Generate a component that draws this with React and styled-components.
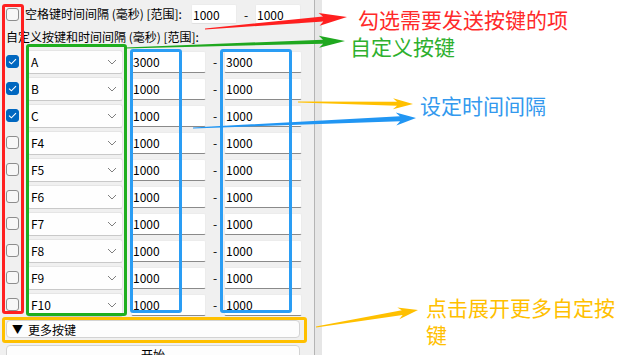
import React from 'react';
import styled, { createGlobalStyle } from 'styled-components';

const GlobalStyle = createGlobalStyle`
  html, body {
    margin: 0;
    padding: 0;
    background: #ffffff;
  }
  body {
    font-family: "Noto Sans CJK SC", "Noto Sans", sans-serif;
    font-size: 12px;
    color: #000;
    overflow: hidden;
  }
`;

const keys = [
  { name: 'A', from: 3000, to: 3000, checked: true },
  { name: 'B', from: 1000, to: 1000, checked: true },
  { name: 'C', from: 1000, to: 1000, checked: true },
  { name: 'F4', from: 1000, to: 1000 },
  { name: 'F5', from: 1000, to: 1000 },
  { name: 'F6', from: 1000, to: 1000 },
  { name: 'F7', from: 1000, to: 1000 },
  { name: 'F8', from: 1000, to: 1000 },
  { name: 'F9', from: 1000, to: 1000 },
  { name: 'F10', from: 1000, to: 1000 },
];

// tapered arrow: thin tail, thick shaft near the head, notched head
const arrowPoints = ([sx, sy], [ex, ey], w0, w1, headLen, headW) => {
  const len = Math.hypot(ex - sx, ey - sy);
  const dx = (ex - sx) / len;
  const dy = (ey - sy) / len;
  const nx = -dy;
  const ny = dx;
  const bx = ex - dx * headLen;
  const by = ey - dy * headLen;
  const wx = bx - dx * 4;
  const wy = by - dy * 4;
  const pts = [
    [sx + nx * w0 / 2, sy + ny * w0 / 2],
    [bx + nx * w1 / 2, by + ny * w1 / 2],
    [wx + nx * headW / 2, wy + ny * headW / 2],
    [ex, ey],
    [wx - nx * headW / 2, wy - ny * headW / 2],
    [bx - nx * w1 / 2, by - ny * w1 / 2],
    [sx - nx * w0 / 2, sy - ny * w0 / 2],
  ];
  return pts.map((p) => p.map((v) => v.toFixed(1)).join(',')).join(' ');
};

const arrows = [
  { from: [205, 29], to: [347, 17], w0: 1, w1: 5, head: 24, hw: 13, color: '#ff1f1f' },
  { from: [125, 48], to: [345, 41], w0: 1, w1: 4, head: 22, hw: 12, color: '#1fa81f' },
  { from: [298, 102], to: [413, 104], w0: 1, w1: 4, head: 16, hw: 11, color: '#ffc000' },
  { from: [193, 128], to: [416, 118], w0: 1, w1: 5, head: 16, hw: 13, color: '#2196f3' },
  { from: [316, 327], to: [418, 310], w0: 1, w1: 5, head: 16, hw: 12, color: '#ffc000' },
];

const Check = ({ checked }) => (
  <CheckBox checked={checked}>
    {checked && (
      <svg width="9" height="7" viewBox="0 0 9 7">
        <path d="M1 3.6 L3.4 5.8 L8 1.2" fill="none" stroke="#fff" strokeWidth="1.1" />
      </svg>
    )}
  </CheckBox>
);

const App = () => {
  return (
    <Page>
      <GlobalStyle />
      <Panel>
        <TopRow>
          <Check />
          <Label>空格键时间间隔 (毫秒) [范围]:</Label>
          <TopInput readOnly value="1000" />
          <Dash>-</Dash>
          <TopInput readOnly value="1000" />
        </TopRow>

        <SectionLabel>自定义按键和时间间隔 (毫秒) [范围]:</SectionLabel>

        <KeyList>
          {keys.map((k) => (
            <KeyRow key={k.name}>
              <Check checked={k.checked} />
              <KeySelect>
                <span>{k.name}</span>
                <svg width="10" height="6" viewBox="0 0 10 6">
                  <path d="M1 1 L5 5 L9 1" fill="none" stroke="#707070" strokeWidth="0.9" />
                </svg>
              </KeySelect>
              <RangeInput readOnly value={k.from} />
              <RangeDash>-</RangeDash>
              <RangeInput readOnly value={k.to} wide />
            </KeyRow>
          ))}
        </KeyList>

        <MoreButton>
          <Triangle>▼</Triangle>
          更多按键
        </MoreButton>
        <StartButton>开始</StartButton>
      </Panel>
      <Divider />
      <Blank />

      <Overlay>
        <Frame color="#ff2020" left={2} top={4} width={22} height={310} />
        <Frame color="#1fae1f" left={26} top={44} width={101} height={272} />
        <Frame color="#2a9df4" left={130} top={49} width={52} height={264} />
        <Frame color="#2a9df4" left={220} top={49} width={72} height={264} />
        <Frame color="#ffc000" left={2} top={317} width={305} height={26} />

        <ArrowLayer width="626" height="355" viewBox="0 0 626 355">
          {arrows.map((a, i) => (
            <polygon
              key={i}
              points={arrowPoints(a.from, a.to, a.w0, a.w1, a.head, a.hw)}
              fill={a.color}
            />
          ))}
        </ArrowLayer>

        <Note color="#ff2a2a" left={358} top={6}>勾选需要发送按键的项</Note>
        <Note color="#2eb02e" left={350} top={33}>自定义按键</Note>
        <Note color="#3399ee" left={420} top={92}>设定时间间隔</Note>
        <Note color="#ffc000" left={426} top={294} width={196}>点击展开更多自定按键</Note>
      </Overlay>
    </Page>
  );
};

const Page = styled.div`
  position: relative;
  display: flex;
  width: 626px;
  height: 355px;
  overflow: hidden;
`;

const Panel = styled.div`
  width: 314px;
  flex-shrink: 0;
  background: #f0f0f0;
  padding: 4px 0 0 6px;
  box-sizing: border-box;
  display: flex;
  flex-direction: column;
`;

const Divider = styled.div`
  width: 8px;
  flex-shrink: 0;
  background: #e6e6e6;
  border-left: 1px solid #b4b4b4;
  box-sizing: border-box;
`;

const Blank = styled.div`
  flex: 1;
  background: #fff;
`;

const TopRow = styled.div`
  display: flex;
  align-items: center;
  height: 20px;
`;

const Label = styled.span`
  margin-left: 6px;
  width: 166px;
  white-space: nowrap;
  line-height: 16px;
`;

const TopInput = styled.input`
  width: 46px;
  height: 20px;
  box-sizing: border-box;
  border: 1px solid #ececec;
  border-bottom-color: #e0e0e0;
  border-radius: 2px;
  background: #fff;
  font: inherit;
  padding: 0 0 0 1px;
  outline: none;
  color: #000;
`;

const Dash = styled.span`
  width: 18px;
  text-align: center;
`;

const SectionLabel = styled.div`
  margin-top: 5px;
  line-height: 16px;
  white-space: nowrap;
`;

const KeyList = styled.div`
  margin-top: 3px;
  display: flex;
  flex-direction: column;
`;

const KeyRow = styled.div`
  display: flex;
  align-items: center;
  height: 27px;
`;

const CheckBox = styled.span`
  width: 13px;
  height: 13px;
  flex-shrink: 0;
  box-sizing: border-box;
  border-radius: 3px;
  display: flex;
  align-items: center;
  justify-content: center;
  background: ${(p) => (p.checked ? '#0067c0' : '#f7f7f7')};
  border: 1px solid ${(p) => (p.checked ? '#0067c0' : '#8d8d8d')};
`;

const KeySelect = styled.div`
  margin-left: 8px;
  width: 96px;
  height: 24px;
  box-sizing: border-box;
  display: flex;
  align-items: center;
  justify-content: space-between;
  padding: 0 5px 0 3px;
  background: #fefefe;
  border: 1px solid #e5e5e5;
  border-bottom-color: #c9c9c9;
  border-radius: 3px;
`;

const RangeInput = styled.input`
  margin-left: ${(p) => (p.wide ? '0' : '8px')};
  width: ${(p) => (p.wide ? '78px' : '75px')};
  height: 22px;
  box-sizing: border-box;
  border: 1px solid #ececec;
  border-bottom: 1px solid #8a8a8a;
  border-radius: 2px;
  background: #fff;
  font: inherit;
  padding: 0 0 0 1px;
  outline: none;
  color: #000;
`;

const RangeDash = styled.span`
  width: 18px;
  text-align: center;
`;

const MoreButton = styled.div`
  margin-top: 2px;
  width: 294px;
  height: 18px;
  box-sizing: border-box;
  padding-left: 5px;
  display: flex;
  align-items: center;
  background: #fdfdfd;
  border: 1px solid #d3d3d3;
  border-radius: 4px;
`;

const Triangle = styled.span`
  margin-right: 5px;
  font-size: 11px;
`;

const StartButton = styled.div`
  margin-top: 7px;
  width: 294px;
  height: 24px;
  box-sizing: border-box;
  display: flex;
  justify-content: center;
  align-items: center;
  background: #fdfdfd;
  border: 1px solid #d3d3d3;
  border-radius: 4px;
`;

const Overlay = styled.div`
  position: absolute;
  inset: 0;
  pointer-events: none;
`;

const Frame = styled.div`
  position: absolute;
  left: ${(p) => p.left}px;
  top: ${(p) => p.top}px;
  width: ${(p) => p.width}px;
  height: ${(p) => p.height}px;
  box-sizing: border-box;
  border: 3px solid ${(p) => p.color};
  border-radius: 3px;
`;

const ArrowLayer = styled.svg`
  position: absolute;
  left: 0;
  top: 0;
`;

const Note = styled.div`
  position: absolute;
  left: ${(p) => p.left}px;
  top: ${(p) => p.top}px;
  width: ${(p) => (p.width ? `${p.width}px` : 'auto')};
  color: ${(p) => p.color};
  font-family: "Noto Sans CJK SC", sans-serif;
  font-size: 21px;
  line-height: 27px;
  white-space: ${(p) => (p.width ? 'normal' : 'nowrap')};
`;

export default App;
